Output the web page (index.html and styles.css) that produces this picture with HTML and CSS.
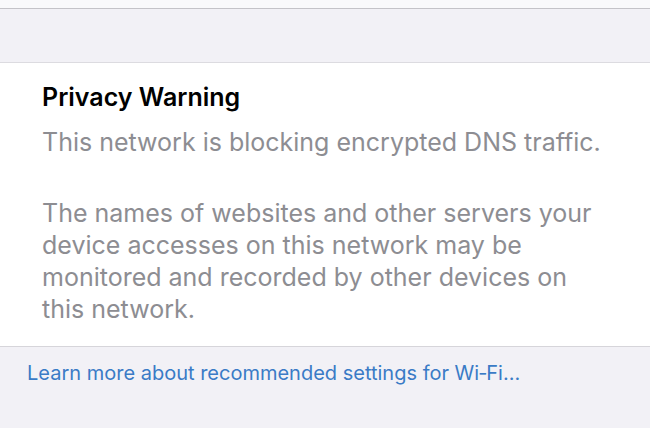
FILE: index.html
```html
<!DOCTYPE html>
<html>
<head>
<meta charset="utf-8">
<link rel="stylesheet" href="styles.css">
</head>
<body>
<div class="page">
  <div class="top-strip"></div>
  <div class="spacer"></div>
  <div class="card">
    <div class="title">Privacy Warning</div>
    <p class="lead">This network is blocking encrypted DNS traffic.</p>
    <p class="body">The names of websites and other servers your device accesses on this network may be monitored and recorded by other devices on this network.</p>
  </div>
  <div class="footer">
    <a class="link">Learn more about recommended settings for Wi‑Fi...</a>
  </div>
</div>
</body>
</html>
```

FILE: styles.css
```css
html, body {
  margin: 0;
  padding: 0;
}
body {
  width: 650px;
  height: 428px;
  overflow: hidden;
  background: #f2f1f6;
  font-family: Inter, "Noto Sans", sans-serif;
}
.page {
  display: flex;
  flex-direction: column;
}
.top-strip {
  height: 8px;
  background: #f9f9fb;
  border-bottom: 1px solid #c4c3c8;
}
.spacer {
  height: 53px;
  background: #f2f1f6;
  border-bottom: 1px solid #dcdbe0;
}
.card {
  background: #ffffff;
  height: 284px;
  box-sizing: border-box;
  padding: 19px 40px 0 42px;
  border-bottom: 1px solid #d6d5da;
}
.title {
  font-size: 25px;
  font-weight: 600;
  color: #000;
  line-height: 30px;
}
.lead, .body {
  margin: 0;
  font-size: 25px;
  color: #8d8d92;
}
.lead {
  margin-top: 15px;
  line-height: 31.6px;
}
.body {
  margin-top: 38px;
  line-height: 32px;
}
.footer {
  padding: 14px 27px;
}
.link {
  font-size: 20px;
  color: #3a7bc6;
  line-height: 24px;
}
```
